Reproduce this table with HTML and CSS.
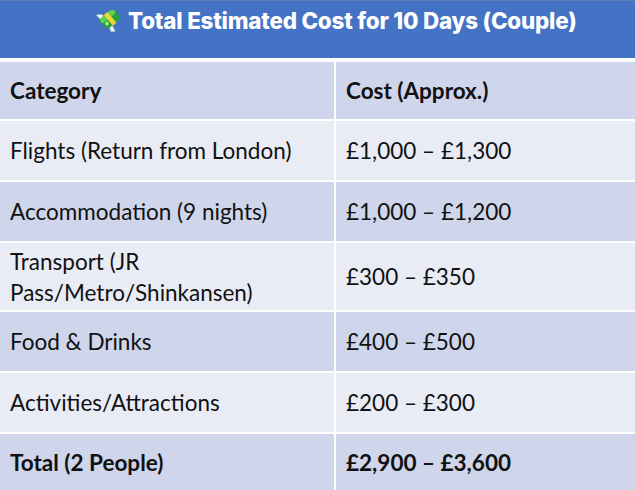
FILE: index.html
```html
<!DOCTYPE html>
<html lang="en">
<head>
<meta charset="utf-8">
<title>Total Estimated Cost</title>
<link rel="stylesheet" href="styles.css">
</head>
<body>
<div class="sheet">
  <div class="title">
    <svg class="emoji" viewBox="0 0 24 22" width="24" height="22" aria-hidden="true">
      <path d="M0.5 5 C4 3.5 8 5 10.5 8 L7 13 C5 10 3 7.5 0.5 5 Z" fill="#f4f6f8" stroke="#b9c4cf" stroke-width="0.7"/>
      <path d="M13 13 C16 15 18 18 19 21.5 L15 21.5 C14 18 12.5 16 11 15 Z" fill="#f4f6f8" stroke="#b9c4cf" stroke-width="0.7"/>
      <g transform="rotate(-40 14 9)">
        <rect x="5" y="2.5" width="18" height="13" rx="3.5" fill="#27a33c"/>
        <rect x="5" y="2.5" width="18" height="5.5" rx="3" fill="#62cf4a"/>
        <rect x="12" y="2" width="4.5" height="14" fill="#f0d43c"/>
        <circle cx="8.8" cy="10.5" r="1.8" fill="#b6ec86"/>
      </g>
    </svg>
    <span class="title-text">Total Estimated Cost for 10 Days (Couple)</span>
  </div>
  <div class="table">
    <div class="cell dark bold h-head">Category</div>
    <div class="cell dark bold h-head">Cost (Approx.)</div>

    <div class="cell light h-row">Flights (Return from London)</div>
    <div class="cell light h-row">£1,000 – £1,300</div>

    <div class="cell dark h-row">Accommodation (9 nights)</div>
    <div class="cell dark h-row">£1,000 – £1,200</div>

    <div class="cell light h-tall">Transport (JR<br>Pass/Metro/Shinkansen)</div>
    <div class="cell light h-tall">£300 – £350</div>

    <div class="cell dark h-row">Food &amp; Drinks</div>
    <div class="cell dark h-row">£400 – £500</div>

    <div class="cell light h-row">Activities/Attractions</div>
    <div class="cell light h-row">£200 – £300</div>

    <div class="cell dark bold h-total">Total (2 People)</div>
    <div class="cell dark bold h-total">£2,900 – £3,600</div>
  </div>
</div>
</body>
</html>
```

FILE: styles.css
```css
html, body {
  margin: 0;
  padding: 0;
  background: #ffffff;
}

.sheet {
  width: 635px;
  height: 490px;
  overflow: hidden;
  display: flex;
  flex-direction: column;
  gap: 4px;
}

.title {
  height: 59px;
  background: #4472c4;
  border-top: 1px solid #5d7fb8;
  box-sizing: border-box;
  display: flex;
  align-items: flex-start;
  padding: 5px 0 0 96px;
  gap: 8px;
}

.emoji {
  display: block;
  margin-top: 4px;
}

.title-text {
  font-family: Inter, "Noto Sans", sans-serif;
  font-weight: 800;
  font-size: 22.4px;
  line-height: 30px;
  color: #ffffff;
  letter-spacing: -0.2px;
}

.table {
  display: grid;
  grid-template-columns: 334px 1fr;
  column-gap: 2px;
  row-gap: 2px;
}

.cell {
  font-family: Lato, "Liberation Sans", sans-serif;
  font-size: 22.5px;
  line-height: 31px;
  color: #111111;
  padding: 0 10px;
  display: flex;
  align-items: center;
}

.cell.bold {
  font-weight: 700;
}

.dark {
  background: #cfd5ea;
}

.light {
  background: #e9ebf5;
}

.h-head { height: 57px; }
.h-row { height: 59px; }
.h-tall { height: 67px; }
.h-total { height: 56px; }
```
